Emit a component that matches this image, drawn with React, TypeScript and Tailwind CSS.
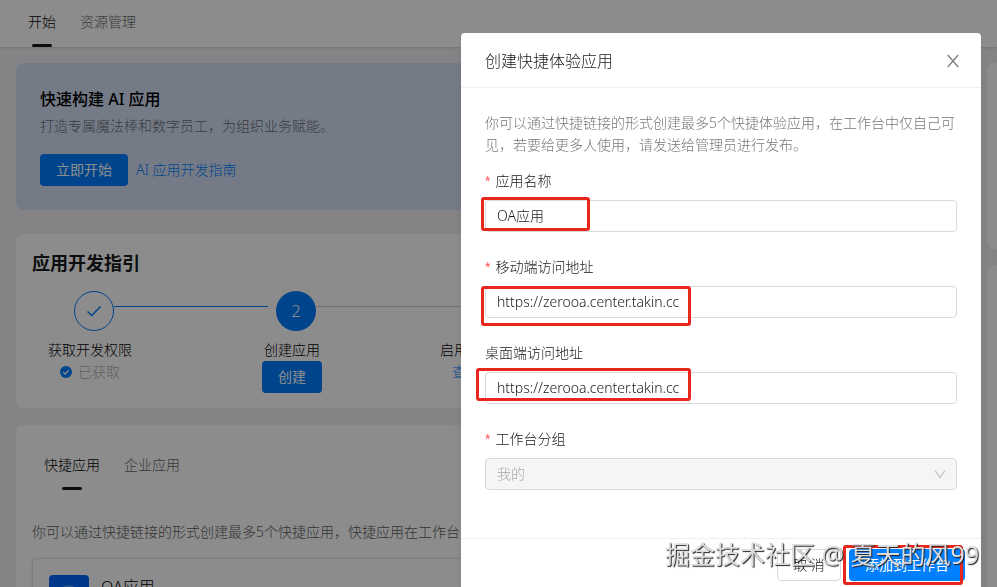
import { useState } from "react";

interface FieldProps {
  id: string;
  label: string;
  required?: boolean;
  value: string;
  onChange: (value: string) => void;
  markClass: string;
}

const mark = "pointer-events-none absolute rounded-[3px] border-3 border-[#e8261d]";

function FieldLabel({ id, label, required }: { id: string; label: string; required?: boolean }) {
  return (
    <label htmlFor={id} className="mb-2 flex leading-[22px] text-[#171a1d]">
      {required && <span className="mr-[5px] font-['Liberation_Sans'] text-[#ff4d4f]">*</span>}
      {label}
    </label>
  );
}

function Field({ id, label, required, value, onChange, markClass }: FieldProps) {
  return (
    <div className="mb-6">
      <FieldLabel id={id} label={label} required={required} />
      <div className="relative">
        <input
          id={id}
          value={value}
          onChange={(e) => onChange(e.target.value)}
          className="block h-8 w-full rounded-sm border border-[#d9d9d9] bg-white px-[11px] pb-0.5 text-[#171a1d] outline-none"
        />
        <span className={`${mark} ${markClass}`} />
      </div>
    </div>
  );
}

function Banner() {
  return (
    <section className="rounded-lg bg-[#d5e1f5] p-6">
      <h2 className="text-base leading-6 font-medium text-black">快速构建 AI 应用</h2>
      <p className="mt-1 leading-[22px] text-[#666c78]">打造专属魔法棒和数字员工，为组织业务赋能。</p>
      <div className="mt-[17px] flex items-center gap-2">
        <button className="h-8 rounded-sm bg-[#007fff] px-4 font-normal text-white">立即开始</button>
        <a href="#guide" className="text-[#007fff]">AI 应用开发指南</a>
      </div>
    </section>
  );
}

function DevGuide() {
  return (
    <section className="mt-6 overflow-hidden rounded-lg bg-white px-4 pt-4 pb-[15px]">
      <h2 className="text-lg leading-[26px] font-bold text-[#171a1d]">应用开发指引</h2>
      <ol className="mt-[15px] flex">
        <li className="w-[202px] shrink-0">
          <div className="flex pl-[42px]">
            <span className="flex size-10 shrink-0 items-center justify-center rounded-full border border-[#007fff]">
              <svg width="16" height="16" viewBox="0 0 16 16" fill="none" stroke="#007fff" strokeWidth="1.5">
                <path d="M1.5 8.5 5.8 12.5 14.5 3.5" />
              </svg>
            </span>
            <span className="mt-[15px] h-px w-[154px] shrink-0 bg-[#007fff]" />
          </div>
          <div className="mt-2 flex w-[116px] flex-col items-center leading-[22px]">
            <span className="text-black">获取开发权限</span>
            <span className="flex items-center gap-1.5 text-[#b0b0b0]">
              <svg width="12" height="12" viewBox="0 0 12 12" fill="none">
                <circle cx="6" cy="6" r="6" fill="#007fff" />
                <path d="m3.2 6.1 2 2 3.6-3.9" stroke="#fff" strokeWidth="1.2" />
              </svg>
              已获取
            </span>
          </div>
        </li>
        <li className="w-[202px] shrink-0">
          <div className="flex pl-[42px]">
            <span className="flex size-10 shrink-0 items-center justify-center rounded-full bg-[#007fff] text-base text-white">2</span>
            <span className="mt-[15px] h-px w-[154px] shrink-0 bg-[#d0d0d0]" />
          </div>
          <div className="mt-2 flex w-[116px] flex-col items-center leading-[22px]">
            <span className="text-black">创建应用</span>
            <button className="h-8 rounded-sm bg-[#007fff] px-4 font-normal text-white">创建</button>
          </div>
        </li>
        <li className="shrink-0">
          <div className="pl-[42px]">
            <span className="flex size-10 items-center justify-center rounded-full border border-[#d0d0d0] text-base">3</span>
          </div>
          <div className="mt-2 flex flex-col pl-1 leading-[22px]">
            <span className="text-black">启用应用</span>
            <a href="#enable" className="pl-3 text-[#007fff]">查看</a>
          </div>
        </li>
      </ol>
    </section>
  );
}

function AppList() {
  return (
    <section className="mt-[17px] rounded-lg bg-white px-4 pt-[29px]">
      <div className="flex gap-6 px-3">
        <button className="flex flex-col items-center gap-[11px] leading-[22px] text-black">
          快捷应用
          <span className="h-[3px] w-5 rounded-full bg-[#171a1d]" />
        </button>
        <button className="flex leading-[22px] text-[#666666]">企业应用</button>
      </div>
      <p className="mt-[31px] leading-[22px] whitespace-nowrap text-[#5c5c5c]">
        你可以通过快捷链接的形式创建最多5个快捷应用，快捷应用在工作台中仅自己可见。
      </p>
      <div className="mt-[15px] flex gap-3 rounded-sm border border-[#e4e4e4] p-4 shadow-sm">
        <svg width="40" height="40" viewBox="0 0 40 40">
          <rect width="40" height="40" rx="4" fill="#0066ff" />
          <circle cx="20" cy="20" r="10" fill="#4c94ff" />
        </svg>
        <h3 className="text-base leading-6 text-black">OA应用</h3>
      </div>
    </section>
  );
}

export default function App() {
  const [name, setName] = useState("OA应用");
  const [mobileUrl, setMobileUrl] = useState("https://zerooa.center.takin.cc");
  const [desktopUrl, setDesktopUrl] = useState("https://zerooa.center.takin.cc");

  return (
    <div className="h-screen overflow-hidden bg-[#f1f1f4] font-['Noto_Sans','Noto_Sans_CJK_SC',sans-serif] text-sm font-light">
      <header className="flex h-[47px] gap-6 bg-white px-7 shadow-sm">
        <button className="flex flex-col items-center justify-between pt-[11px] leading-[22px] text-black">
          开始
          <span className="h-[3px] w-5 rounded-full bg-[#171a1d]" />
        </button>
        <button className="flex pt-[11px] leading-[22px] text-[#666666]">资源管理</button>
      </header>

      <div className="flex gap-4 pt-4 pl-4">
        <main className="min-w-0 flex-1">
          <Banner />
          <DevGuide />
          <AppList />
        </main>
        <aside className="flex w-2.5 flex-col gap-4">
          <div className="h-[186px] rounded-l-lg bg-white" />
          <div className="h-[400px] rounded-l-lg bg-white" />
        </aside>
      </div>

      <div className="fixed inset-0 flex items-start justify-end overflow-hidden bg-black/45 pt-[33px] pr-4">
        <div role="dialog" aria-labelledby="dialog-title" className="relative w-full max-w-[520px] rounded-sm bg-white shadow-lg">
          <div className="flex items-center justify-between border-b border-[#f0f0f0] px-6 pt-[17px] pb-[15px]">
            <h1 id="dialog-title" className="text-base leading-[22px] text-[#171a1d]">创建快捷体验应用</h1>
            <button aria-label="关闭" className="-mr-1">
              <svg width="16" height="16" viewBox="0 0 16 16" fill="none" stroke="#808080" strokeWidth="1.4">
                <path d="M2.8 2 13.2 14M13.2 2 2.8 14" />
              </svg>
            </button>
          </div>

          <form className="p-6">
            <p className="mb-3.5 leading-[22px] text-[#777777]">
              你可以通过快捷链接的形式创建最多5个快捷体验应用，在工作台中仅自己可见，若要给更多人使用，请发送给管理员进行发布。
            </p>
            <Field
              id="name"
              label="应用名称"
              required
              value={name}
              onChange={setName}
              markClass="-top-[3px] -left-1 h-[34px] w-[109px]"
            />
            <Field
              id="mobile"
              label="移动端访问地址"
              required
              value={mobileUrl}
              onChange={setMobileUrl}
              markClass="top-0 -left-1 h-10 w-[210px]"
            />
            <Field
              id="desktop"
              label="桌面端访问地址"
              value={desktopUrl}
              onChange={setDesktopUrl}
              markClass="-top-1 -left-[9px] h-[33px] w-[215px]"
            />
            <div className="mb-6">
              <FieldLabel id="group" label="工作台分组" required />
              <div className="relative">
                <select
                  id="group"
                  disabled
                  className="block h-8 w-full appearance-none rounded-sm border border-[#d9d9d9] bg-[#f5f5f5] px-[11px] text-[#a8a8a8] opacity-100"
                >
                  <option>我的</option>
                </select>
                <svg className="absolute top-2.5 right-[11px]" width="12" height="12" viewBox="0 0 12 12" fill="none" stroke="#bfbfbf" strokeWidth="1.2">
                  <path d="M1 2.5 6 9.5 11 2.5" />
                </svg>
              </div>
            </div>
          </form>

          <div className="flex justify-end gap-2 border-t border-[#f0f0f0] px-4 py-2.5">
            <button className="h-8 w-16 rounded-sm border border-[#d9d9d9] bg-white text-[#171a1d]">取 消</button>
            <div className="relative">
              <button className="h-8 rounded-sm bg-[#007fff] px-4 font-normal text-white">添加到工作台</button>
              <span className={`${mark} -top-1 -left-1.5 h-10 w-[120px]`} />
            </div>
          </div>

          <div className="pointer-events-none absolute right-0.5 bottom-[21px] text-[25px] leading-8 font-normal whitespace-nowrap text-[#dcdcdc] [text-shadow:1px_1px_1px_#222]">
            掘金技术社区 @ 夏天的风99
          </div>
        </div>
      </div>
    </div>
  );
}
